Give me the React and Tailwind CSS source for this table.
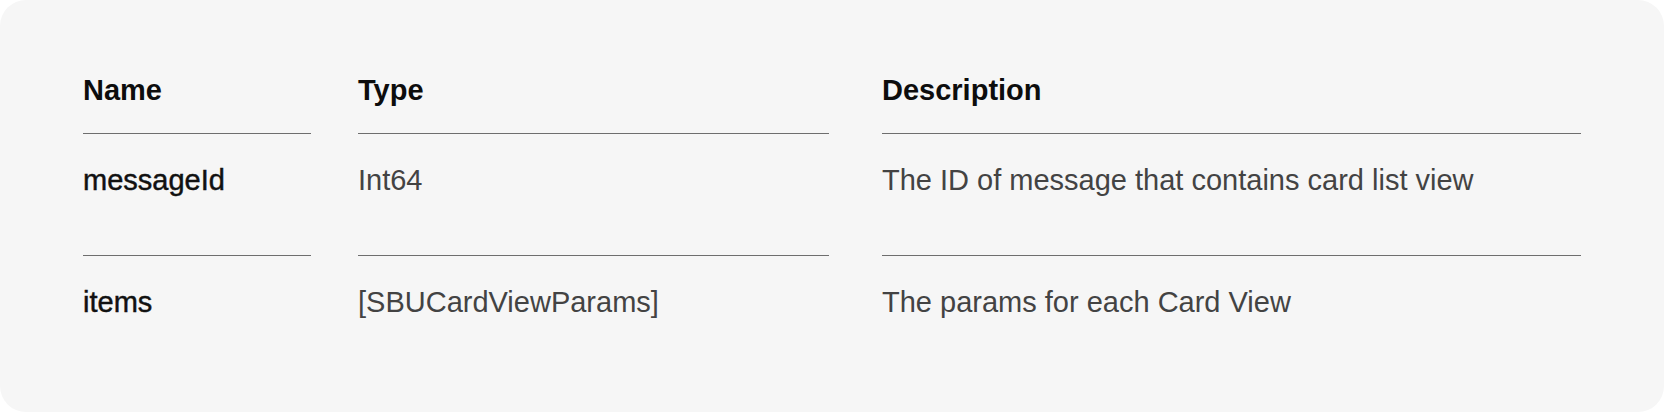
const rows = [
  {
    name: "messageId",
    type: "Int64",
    description: "The ID of message that contains card list view",
  },
  {
    name: "items",
    type: "[SBUCardViewParams]",
    description: "The params for each Card View",
  },
];

const App = () => {
  return (
    <div className="bg-white w-[1664px] h-[412px]">
      <div
        className="h-[412px] rounded-[26px] bg-[#f6f6f6] px-[83px] pt-[68px] text-[29px] leading-[44px]"
        style={{ fontFamily: '"Liberation Sans", Arial, sans-serif' }}
      >
        <div className="flex font-bold text-[#0d0d0d]">
          <div className="w-[228px] pb-[21px] border-b border-[#6e6e6e]">Name</div>
          <div className="w-[471px] ml-[47px] pb-[21px] border-b border-[#6e6e6e]">Type</div>
          <div className="w-[699px] ml-[53px] pb-[21px] border-b border-[#6e6e6e]">
            Description
          </div>
        </div>

        {rows.map((row, index) => {
          const last = index === rows.length - 1;
          const cell = last
            ? "pt-[24px] pb-[53px]"
            : "pt-[24px] pb-[53px] border-b border-[#6e6e6e]";

          return (
            <div key={row.name} className="flex">
              <div
                className={`w-[228px] text-[#111111] [-webkit-text-stroke:0.45px_#111111] ${cell}`}
              >
                {row.name}
              </div>
              <div className={`w-[471px] ml-[47px] text-[#434343] ${cell}`}>
                {row.type}
              </div>
              <div className={`w-[699px] ml-[53px] text-[#434343] ${cell}`}>
                {row.description}
              </div>
            </div>
          );
        })}
      </div>
    </div>
  );
};

export default App;
